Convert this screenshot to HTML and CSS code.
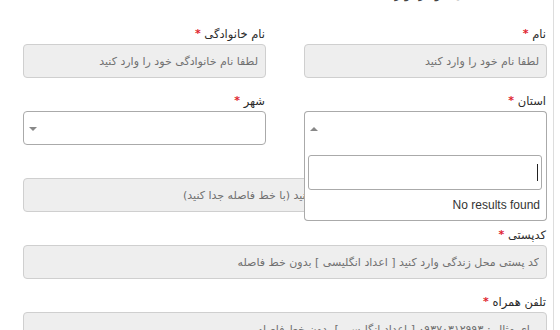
FILE: index.html
```html
<!DOCTYPE html>
<html lang="fa">
<head>
<meta charset="utf-8">
<link rel="stylesheet" href="styles.css">
</head>
<body>
<div class="page" dir="rtl">
  <div class="title">اطلاعات شخصی خود را وارد کنید</div>

  <div class="row two">
    <div class="field">
      <label class="lbl">نام <span class="req">*</span></label>
      <input class="inp" type="text" placeholder="لطفا نام خود را وارد کنید">
    </div>
    <div class="field">
      <label class="lbl">نام خانوادگی <span class="req">*</span></label>
      <input class="inp" type="text" placeholder="لطفا نام خانوادگی خود را وارد کنید">
    </div>
  </div>

  <div class="row two">
    <div class="field">
      <label class="lbl">استان <span class="req">*</span></label>
      <div class="select open">
        <span class="arrow up"></span>
        <div class="dropdown">
          <div class="search"><span class="caret"></span></div>
          <div class="results">No results found</div>
        </div>
      </div>
    </div>
    <div class="field">
      <label class="lbl">شهر <span class="req">*</span></label>
      <div class="select">
        <span class="arrow down"></span>
      </div>
    </div>
  </div>

  <div class="row">
    <div class="field">
      <label class="lbl">تاریخ تولد <span class="req">*</span></label>
      <input class="inp" type="text" placeholder="تاریخ تولد خود را به صورت سال و ماه و روز وارد کنید (با خط فاصله جدا کنید)">
    </div>
  </div>

  <div class="row">
    <div class="field">
      <label class="lbl">کدپستی <span class="req">*</span></label>
      <input class="inp" type="text" placeholder="کد پستی محل زندگی وارد کنید [ اعداد انگلیسی ] بدون خط فاصله">
    </div>
  </div>

  <div class="row">
    <div class="field">
      <label class="lbl">تلفن همراه <span class="req">*</span></label>
      <input class="inp" type="text" placeholder="برای مثال : ۰۹۳۷۰۳۱۲۹۹۳ [ اعداد انگلیسی ] بدون خط فاصله">
    </div>
  </div>
</div>
</body>
</html>
```

FILE: styles.css
```css
* { box-sizing: border-box; }

html, body {
  margin: 0;
  background: #fff;
  overflow: hidden;
}

.page {
  width: 554px;
  min-height: 330px;
  border-right: 1px solid #dddddd;
  padding: 0 6px 0 23px;
  font-family: "DejaVu Sans", "Noto Sans", sans-serif;
  color: #333;
}

.title {
  margin-top: -16px;
  margin-bottom: 20px;
  padding-right: 2px;
  font-size: 13px;
  line-height: 20px;
  color: #444;
}

.row {
  margin-bottom: 13px;
}

.row.two {
  display: grid;
  grid-template-columns: 1fr 1fr;
  column-gap: 38px;
}

.field {
  display: flex;
  flex-direction: column;
}

.lbl {
  display: block;
  height: 20px;
  line-height: 20px;
  font-size: 11.5px;
  padding-right: 1px;
  color: #2b2b2b;
}

.req {
  color: #e0232e;
  font-size: 11px;
  font-weight: bold;
  vertical-align: 1px;
}

.inp {
  display: block;
  width: 100%;
  height: 34px;
  margin: 0;
  padding: 0 7px;
  border: 1px solid #cfcfcf;
  border-radius: 4px;
  background: #eeeeee;
  font-family: "DejaVu Sans", sans-serif;
  font-size: 11px;
  color: #555;
  direction: rtl;
  outline: none;
}

.inp::placeholder {
  color: #707070;
  opacity: 1;
}

.select {
  position: relative;
  height: 34px;
  border: 1px solid #aaaaaa;
  border-radius: 4px;
  background: #fff;
  display: flex;
  align-items: center;
  justify-content: flex-end;
  padding-left: 5px;
}

.select.open {
  border-bottom-left-radius: 0;
  border-bottom-right-radius: 0;
  border-bottom-color: transparent;
  z-index: 5;
}

.arrow {
  width: 0;
  height: 0;
  border-left: 4px solid transparent;
  border-right: 4px solid transparent;
}

.arrow.down {
  border-top: 4px solid #888;
  margin-top: 2px;
}

.arrow.up {
  border-bottom: 4px solid #888;
  margin-top: 1px;
}

.dropdown {
  position: absolute;
  top: 100%;
  left: -1px;
  right: -1px;
  background: #fff;
  border: 1px solid #aaaaaa;
  border-top: 0;
  border-radius: 0 0 4px 4px;
  padding: 11px 4px 0 3px;
}

.search {
  height: 35px;
  border: 1px solid #aaaaaa;
  border-radius: 3px;
  display: flex;
  align-items: center;
  padding-right: 3px;
}

.caret {
  display: block;
  width: 1px;
  height: 17px;
  background: #222;
}

.results {
  height: 30px;
  line-height: 30px;
  padding-right: 2px;
  font-family: "Liberation Sans", Arial, sans-serif;
  font-size: 12px;
  color: #333;
  direction: ltr;
  text-align: right;
}
```
